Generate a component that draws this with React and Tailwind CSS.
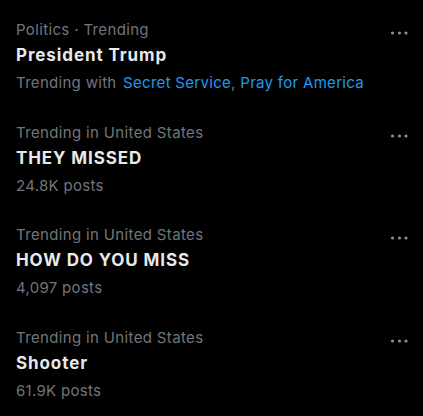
import React from 'react';

const trends = [
  { category: 'Politics · Trending', title: 'President Trump', with: ['Secret Service', 'Pray for America'] },
  { category: 'Trending in United States', title: 'THEY MISSED', meta: '24.8K posts' },
  { category: 'Trending in United States', title: 'HOW DO YOU MISS', meta: '4,097 posts' },
  { category: 'Trending in United States', title: 'Shooter', meta: '61.9K posts' },
];

const MoreIcon = () => (
  <svg viewBox="0 0 20 6" className="w-[20px] h-[6px] fill-[#8b8f94]">
    <circle cx="3.5" cy="3" r="1.6" />
    <circle cx="10.5" cy="3" r="1.6" />
    <circle cx="17" cy="3" r="1.6" />
  </svg>
);

const TrendItem = ({ trend }) => (
  <div className="relative h-[102.6px] pt-[15px] px-4">
    <div className="text-[15px] leading-[20px] tracking-[0.35px] text-[#71767b]">{trend.category}</div>
    <div className="mt-[3px] text-[17px] leading-[24px] font-bold tracking-[0.9px] text-[#e7e9ea]">{trend.title}</div>
    <div className="mt-[6px] text-[15px] leading-[20px] tracking-[0.3px] text-[#71767b]">
      {trend.with ? (
        <>
          Trending with{' '}
          <span className="ml-[2px] text-[#1d9bf0]">{trend.with[0]}</span>,{' '}
          <span className="text-[#1d9bf0]">{trend.with[1]}</span>
        </>
      ) : (
        trend.meta
      )}
    </div>
    <div className="absolute right-[14px] top-[18px] h-[20px] flex items-center">
      <MoreIcon />
    </div>
  </div>
);

export default function App() {
  return (
    <div className="w-[423px] h-[416px] bg-black overflow-hidden pt-[5px] font-['Inter',sans-serif]">
      {trends.map((t, i) => (
        <TrendItem key={i} trend={t} />
      ))}
    </div>
  );
}
